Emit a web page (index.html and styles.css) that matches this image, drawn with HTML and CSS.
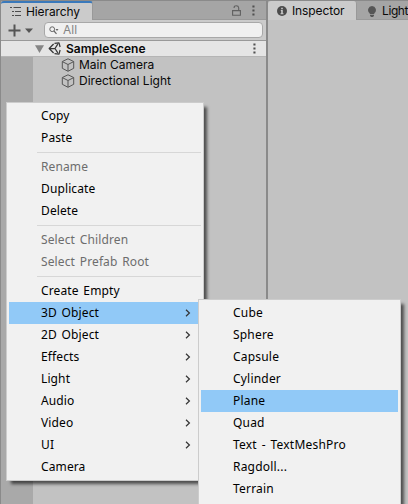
FILE: index.html
```html
<!DOCTYPE html>
<html lang="en">
<head>
<meta charset="utf-8">
<title>Hierarchy</title>
<link rel="stylesheet" href="styles.css">
</head>
<body>
<svg class="defs" width="0" height="0">
  <symbol id="cube" viewBox="0 0 14 14"><path d="M7 .8 12.7 3.5V10.300L7 13.300 1.300 10.300V3.500ZM1.500 3.700 7 6.500 12.500 3.700M7 6.500V13" fill="none" stroke="#555" stroke-width="1" stroke-linejoin="round"/></symbol>
  <symbol id="arrow" viewBox="0 0 6 8"><path d="M1 .8 4.400 4 1 7.200" fill="none" stroke="#333" stroke-width="1.200"/></symbol>
  <symbol id="dots" viewBox="0 0 3 11"><path d="M.4.500h2.100v2H.4zM.4 4.500h2.100v2H.4zM.4 8.500h2.100v2H.4z" fill="#505050"/></symbol>
</svg>
<main class="editor">
  <section class="hierarchy">
    <header class="tabs">
      <div class="tab tab-hierarchy">
        <svg width="11" height="9" viewBox="0 0 11 9"><path d="M0 .5h2M3.500.500H11M2 4.500h2M5 4.500h6M2 8.500h2M5 8.500h6" stroke="#4c4c4c"/></svg>
        <span>Hierarchy</span>
      </div>
      <div class="tab-tools">
        <svg width="9" height="11" viewBox="0 0 9 11"><path d="M.6 5.600h7.800v4.600H.6zM2.100 3V2.500Q2.100.7 4.300.7T6.700 2.700V5.500" fill="none" stroke="#606060" stroke-width="1.100"/></svg>
        <svg width="3" height="11"><use href="#dots"/></svg>
      </div>
    </header>
    <div class="toolbar">
      <svg class="plus" width="26" height="13" viewBox="0 0 26 13"><path d="M6.500.5v12M.5 6.500h12" stroke="#555" stroke-width="2"/><path d="M17 4.500h8l-4 4.500z" fill="#555"/></svg>
      <div class="search">
        <svg width="10" height="9" viewBox="0 0 10 9"><circle cx="3.200" cy="3.200" r="2.400" fill="none" stroke="#666"/><path d="m5 5 2.500 2.800" stroke="#666" stroke-width="1.200"/><path d="M6.500 3h3L8 5z" fill="#666"/></svg>
        <span>All</span>
      </div>
    </div>
    <div class="scene">
      <svg width="9" height="8" viewBox="0 0 9 8"><path d="M0 .3h9L4.500 8z" fill="#858585"/></svg>
      <svg class="unity" width="13" height="13" viewBox="0 0 13 13"><path d="M5.600 2 1.200 6.500 5.600 11M6.500 1.400 11 .9 12.100 5M6.500 11.600 11 12.100 12.100 8M1.200 6.500H7L9.800 2.200M7 6.500 9.800 10.800" fill="none" stroke="#383838" stroke-width="1.250" stroke-linejoin="round"/></svg>
      <b>SampleScene</b>
      <svg class="scene-more" width="3" height="11"><use href="#dots"/></svg>
    </div>
    <div class="tree">
      <div class="gutter"></div>
      <div class="nodes">
        <div class="node"><svg width="14" height="14"><use href="#cube"/></svg><span>Main Camera</span></div>
        <div class="node"><svg width="14" height="14"><use href="#cube"/></svg><span>Directional Light</span></div>
      </div>
    </div>
  </section>
  <section class="inspector">
    <header class="tabs">
      <div class="tab tab-inspector">
        <svg width="10" height="10" viewBox="0 0 10 10"><circle cx="5" cy="5" r="5" fill="#4c4c4c"/><path d="M4.200 1.700h1.600v1.500H4.200zM3.800 4h2v3.200h.7v1H3.500v-1h.7V4.900h-.4z" fill="#cbcbcb"/></svg>
        <span>Inspector</span>
      </div>
      <div class="tab tab-light">
        <svg width="8" height="11" viewBox="0 0 8 11"><path d="M4 0a4 4 0 0 1 2.300 7.200V8H1.700v-.8A4 4 0 0 1 4 0zM2 8.700h4v1L5 11H3L2 9.700z" fill="#555"/></svg>
        <span>Light</span>
      </div>
    </header>
  </section>
</main>

<nav class="menu context-menu">
  <div class="item">Copy</div>
  <div class="item">Paste</div>
  <hr>
  <div class="item disabled">Rename</div>
  <div class="item">Duplicate</div>
  <div class="item">Delete</div>
  <hr>
  <div class="item disabled">Select Children</div>
  <div class="item disabled">Select Prefab Root</div>
  <hr>
  <div class="item">Create Empty</div>
  <div class="item active">3D Object<svg width="6" height="8"><use href="#arrow"/></svg></div>
  <div class="item">2D Object<svg width="6" height="8"><use href="#arrow"/></svg></div>
  <div class="item">Effects<svg width="6" height="8"><use href="#arrow"/></svg></div>
  <div class="item">Light<svg width="6" height="8"><use href="#arrow"/></svg></div>
  <div class="item">Audio<svg width="6" height="8"><use href="#arrow"/></svg></div>
  <div class="item">Video<svg width="6" height="8"><use href="#arrow"/></svg></div>
  <div class="item">UI<svg width="6" height="8"><use href="#arrow"/></svg></div>
  <div class="item">Camera</div>
</nav>
<nav class="menu submenu">
  <div class="item">Cube</div>
  <div class="item">Sphere</div>
  <div class="item">Capsule</div>
  <div class="item">Cylinder</div>
  <div class="item active">Plane</div>
  <div class="item">Quad</div>
  <div class="item">Text - TextMeshPro</div>
  <div class="item">Ragdoll...</div>
  <div class="item">Terrain</div>
</nav>
</body>
</html>
```

FILE: styles.css
```css
* { box-sizing: border-box; }
body {
  margin: 0;
  width: 408px;
  height: 504px;
  overflow: hidden;
  position: relative;
  font: 12px/16px Inter, sans-serif;
  color: #090909;
  background: #8a8a8a;
}
svg { display: block; flex: none; }
.defs { position: absolute; }
.editor { display: flex; height: 504px; padding: 1px 0 0 1px; gap: 2px; }
.hierarchy { width: 265px; display: flex; flex-direction: column; background: #c2c2c2; }
.inspector { flex: 1; min-width: 0; background: #c2c2c2; }
.tabs { display: flex; height: 19px; background: #a5a5a5; }
.tab { display: flex; flex: none; align-items: center; white-space: nowrap; letter-spacing: -.1px; }
.tab-hierarchy {
  width: 92px;
  padding-left: 9px;
  gap: 5px;
  background: #cbcbcb;
  border-top: 2px solid #3a79bb;
  border-right: 1px solid #999;
  border-radius: 3px 3px 0 0;
}
.tab-tools { flex: 1; display: flex; justify-content: flex-end; align-items: center; gap: 11px; padding-right: 11px; border-bottom: 1px solid #999; }
.toolbar { display: flex; align-items: center; height: 21px; padding: 0 3px 0 7px; background: #cbcbcb; border-bottom: 1px solid #999; }
.search {
  display: flex;
  align-items: center;
  gap: 4px;
  width: 219px;
  height: 16px;
  margin-left: auto;
  padding-left: 4px;
  border: 1px solid #a8a8a8;
  border-radius: 4px;
  background: #f0f0f0;
  color: #858585;
}
.scene { display: flex; align-items: center; height: 16px; padding: 0 10px 0 34px; background: #e5e5e5; border-bottom: 1px solid #b5b5b5; }
.unity { margin: 0 5px 0 4px; }
.scene b { font-weight: 600; }
.scene-more { margin-left: auto; }
.tree { flex: 1; display: flex; }
.gutter { width: 32px; background: #a9a9a9; }
.nodes { padding-left: 28px; }
.node { display: flex; align-items: center; gap: 4px; height: 16px; }
.tab-inspector { width: 89px; padding: 1px 0 0 9px; gap: 5px; background: #cbcbcb; border-right: 1px solid #999; border-radius: 3px 3px 0 0; }
.tab-light { width: 51px; padding: 2px 0 0 11px; gap: 6px; border-bottom: 1px solid #999; letter-spacing: -.4px; }

.menu {
  position: absolute;
  padding: 2px;
  background: #f1f1f1;
  border: 1px solid #ccc;
  box-shadow: 4px 4px 3px -1px rgba(0, 0, 0, .6);
  font: 12px/22px "Noto Sans", sans-serif;
  letter-spacing: .12px;
  word-spacing: 1.5px;
  color: #000;
}
.context-menu { left: 6px; top: 102px; width: 198px; height: 379px; }
.submenu { left: 198px; top: 299px; width: 203px; height: 205px; border-bottom: 0; letter-spacing: .2px; }
.item { display: flex; align-items: center; justify-content: space-between; height: 22px; padding: 0 10px 0 32px; white-space: nowrap; }
.active { background: #91c9f7; }
.disabled { color: #6d6d6d; }
.menu hr { height: 1px; margin: 3px 0 3px 28px; border: 0; background: #d7d7d7; }
```
